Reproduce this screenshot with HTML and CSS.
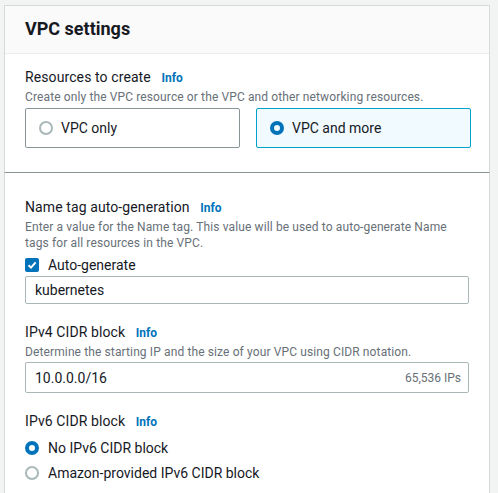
FILE: index.html
```html
<!DOCTYPE html>
<html lang="en">
<head>
    <meta charset="UTF-8">
    <title>VPC settings</title>
    <link rel="stylesheet" href="styles.css">
</head>
<body>
    <div class="panel top-panel">
        <div class="panel-header">
            <h2>VPC settings</h2>
        </div>
        <div class="panel-body">
            <div class="field-label">Resources to create <a class="info-link">Info</a></div>
            <div class="field-desc">Create only the VPC resource or the VPC and other networking resources.</div>
            <div class="tiles">
                <div class="tile">
                    <span class="radio"></span>
                    <span>VPC only</span>
                </div>
                <div class="tile selected">
                    <span class="radio checked"></span>
                    <span>VPC and more</span>
                </div>
            </div>
        </div>
    </div>

    <div class="panel bottom-panel">
        <div class="field">
            <div class="field-label">Name tag auto-generation <a class="info-link">Info</a></div>
            <div class="field-desc">Enter a value for the Name tag. This value will be used to auto-generate Name tags for all resources in the VPC.</div>
            <div class="check-row">
                <span class="checkbox">
                    <svg width="10" height="10" viewBox="0 0 10 10"><path d="M1.5 5.2 L4 7.6 L8.6 2.4" fill="none" stroke="#fff" stroke-width="2"/></svg>
                </span>
                <span>Auto-generate</span>
            </div>
            <div class="text-input">kubernetes</div>
        </div>

        <div class="field">
            <div class="field-label">IPv4 CIDR block <a class="info-link">Info</a></div>
            <div class="field-desc">Determine the starting IP and the size of your VPC using CIDR notation.</div>
            <div class="text-input tall">
                <span>10.0.0.0/16</span>
                <span class="input-hint">65,536 IPs</span>
            </div>
        </div>

        <div class="field">
            <div class="field-label">IPv6 CIDR block <a class="info-link">Info</a></div>
            <div class="radio-row">
                <span class="radio checked"></span>
                <span>No IPv6 CIDR block</span>
            </div>
            <div class="radio-row">
                <span class="radio"></span>
                <span>Amazon-provided IPv6 CIDR block</span>
            </div>
        </div>
    </div>
</body>
</html>
```

FILE: styles.css
```css
:root {
    --text-color: #16191f;
    --light-text: #687078;
    --link-color: #0073bb;
    --border-color: #d5dbdb;
    --input-border: #aab7b8;
    --page-bg: #f2f3f3;
}

body {
    margin: 0;
    padding: 5px 8px 0 4px;
    font-family: Roboto, "Open Sans", sans-serif;
    font-size: 14px;
    color: var(--text-color);
    background-color: var(--page-bg);
    height: 493px;
    box-sizing: border-box;
    overflow: hidden;
}

.panel {
    background: #fff;
    border: 1px solid var(--border-color);
}

.top-panel {
    border-bottom: 1px solid #879596;
}

.bottom-panel {
    border-top: none;
    padding: 23px 20px 0 20px;
}

.panel-header {
    height: 48px;
    box-sizing: border-box;
    background: #fafafa;
    border-bottom: 1px solid #eaeded;
    display: flex;
    align-items: center;
    padding: 0 20px 2px 20px;
}

.panel-header h2 {
    margin: 0;
    font-size: 18px;
    font-weight: 700;
}

.panel-body {
    padding: 12px 18px 24px 20px;
}

.field-label {
    line-height: 22px;
    letter-spacing: 0.1px;
}

.info-link {
    color: var(--link-color);
    font-size: 12px;
    font-weight: 700;
    margin-left: 7px;
    letter-spacing: 0;
}

.field-desc {
    font-size: 12px;
    line-height: 16px;
    letter-spacing: 0.12px;
    color: var(--light-text);
}

.tiles {
    display: flex;
    gap: 16px;
    margin-top: 3px;
}

.tile {
    flex: 1;
    height: 40px;
    box-sizing: border-box;
    border: 1px solid #879596;
    border-radius: 2px;
    display: flex;
    align-items: center;
    gap: 8px;
    padding-left: 13px;
}

.tile.selected {
    border-color: #00a1c9;
    background: #f1faff;
}

.radio {
    width: 14px;
    height: 14px;
    box-sizing: border-box;
    border: 2px solid var(--input-border);
    border-radius: 50%;
    flex-shrink: 0;
}

.radio.checked {
    border: 4px solid var(--link-color);
}

.field {
    margin-bottom: 17px;
}

.check-row {
    display: flex;
    align-items: center;
    gap: 9px;
    height: 20px;
    margin-top: 4px;
}

.checkbox {
    width: 14px;
    height: 14px;
    border-radius: 2px;
    background: var(--link-color);
    display: flex;
    align-items: center;
    justify-content: center;
}

.text-input {
    height: 28px;
    box-sizing: border-box;
    border: 1px solid var(--input-border);
    border-radius: 2px;
    display: flex;
    align-items: center;
    justify-content: space-between;
    padding: 0 7px 0 9px;
    margin-top: 1px;
}

.text-input.tall {
    height: 31px;
    margin-top: 2px;
}

.input-hint {
    font-size: 12px;
    color: var(--light-text);
}

.radio-row {
    display: flex;
    align-items: center;
    gap: 9px;
    height: 20px;
    margin-top: 5px;
}
```
